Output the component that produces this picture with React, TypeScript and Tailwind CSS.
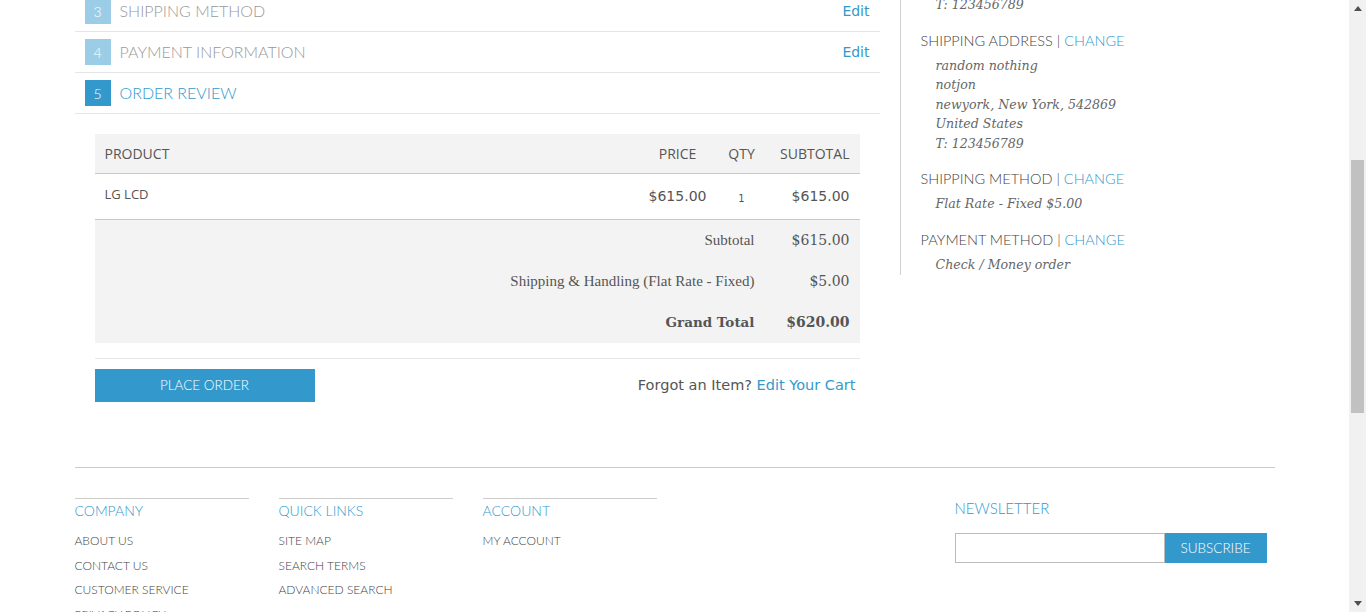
import React from "react";

const blue = "text-[#3399cc]";

function StepRow({ n, title, active, edit }: { n: number; title: string; active?: boolean; edit?: boolean }) {
  return (
    <div className="flex h-[41px] items-center border-b border-[#e6e6e6] px-[10px]">
      <div
        className={
          "flex h-[26px] w-[26px] items-center justify-center text-[14px] font-light text-white " +
          (active ? "bg-[#3399cc]" : "bg-[#9bcde6]")
        }
      >
        {n}
      </div>
      <div className={"-mt-px ml-[9px] text-[16px] font-light uppercase " + (active ? blue : "text-[#999]")}>{title}</div>
      {edit && (
        <a className={"ml-auto font-['DejaVu_Sans',sans-serif] text-[14px] " + blue} href="#">
          Edit
        </a>
      )}
    </div>
  );
}

function SideBlock({ title, lines }: { title: string; lines: string[] }) {
  return (
    <div className="mt-[16px]">
      <div className="text-[14.5px] font-light leading-[20px] text-[#444]">
        {title} | <a className={blue} href="#">CHANGE</a>
      </div>
      <div className="mt-[5px] pl-[15px]">
        {lines.map((l) => (
          <div key={l} className="font-['DejaVu_Serif',serif] text-[12.6px] italic leading-[19.5px] text-[#666]">
            {l}
          </div>
        ))}
      </div>
    </div>
  );
}

function FooterCol({ title, links }: { title: string; links: string[] }) {
  return (
    <div className="w-[174px] border-t border-[#cccccc]">
      <div className={"pt-[2px] text-[14px] font-light leading-[20px] " + blue}>{title}</div>
      <ul className="mt-[8px]">
        {links.map((l) => (
          <li key={l} className="text-[12px] font-light leading-[24.5px] text-[#444]">
            {l}
          </li>
        ))}
      </ul>
    </div>
  );
}

export default function App() {
  return (
    <div className="flex h-[612px] overflow-hidden bg-white font-['Lato',sans-serif]">
      <div className="flex-1 overflow-hidden">
        <div className="mx-auto w-[1200px]">
          {/* checkout body */}
          <div className="flex items-start">
            <div className="-mt-[9px] w-[805px]">
              <StepRow n={3} title="Shipping Method" edit />
              <StepRow n={4} title="Payment Information" edit />
              <StepRow n={5} title="Order Review" active />

              <div className="mx-[20px] mt-[20px]">
                <div className="flex h-[40px] items-center border-b border-[#c8c8c8] bg-[#f3f3f3] font-['Open_Sans',sans-serif] text-[14px] text-[#555]">
                  <div className="flex-1 pl-[10px]">PRODUCT</div>
                  <div className="w-[80px] text-center">PRICE</div>
                  <div className="w-[48px] text-center">QTY</div>
                  <div className="w-[94px] pr-[10px] text-right">SUBTOTAL</div>
                </div>
                <div className="flex h-[46px] items-center border-b border-[#c8c8c8] text-[#555]">
                  <div className="-mt-[4px] flex-1 pl-[10px] font-['Open_Sans',sans-serif] text-[13px]">LG LCD</div>
                  <div className="w-[80px] text-center font-['DejaVu_Sans',sans-serif] text-[14px]">$615.00</div>
                  <div className="w-[48px] pt-[3px] text-center font-['DejaVu_Sans',sans-serif] text-[10px]">1</div>
                  <div className="w-[94px] pr-[10px] text-right font-['DejaVu_Sans',sans-serif] text-[14px]">$615.00</div>
                </div>
                <div className="bg-[#f3f3f3] text-[#555]">
                  {[
                    ["Subtotal", "$615.00"],
                    ["Shipping & Handling (Flat Rate - Fixed)", "$5.00"],
                  ].map(([l, v]) => (
                    <div key={l} className="flex h-[41px] items-center justify-end">
                      <div className="font-['Liberation_Serif',serif] text-[15px]">{l}</div>
                      <div className="w-[105px] pr-[10px] text-right font-['DejaVu_Serif',serif] text-[14px]">{v}</div>
                    </div>
                  ))}
                  <div className="flex h-[41px] items-center justify-end font-bold">
                    <div className="font-['DejaVu_Serif',serif] text-[13.5px]">Grand Total</div>
                    <div className="w-[105px] pr-[10px] text-right font-['DejaVu_Serif',serif] text-[14px]">$620.00</div>
                  </div>
                </div>

                <div className="mt-[15px] flex items-center justify-between border-t border-[#e8e8e8] pt-[10px]">
                  <button className="h-[33px] w-[220px] bg-[#3399cc] text-[13.5px] font-light text-white">PLACE ORDER</button>
                  <div className="pr-[4px] font-['DejaVu_Sans',sans-serif] text-[14.5px] text-[#555]">
                    Forgot an Item? <a className={blue} href="#">Edit Your Cart</a>
                  </div>
                </div>
              </div>
            </div>

            {/* progress sidebar */}
            <div className="-mt-[5px] ml-[20px] flex-1 border-l border-[#d0d0d0] pb-[1px] pl-[20px]">
              <div className="pl-[15px] font-['DejaVu_Serif',serif] text-[12.6px] italic leading-[19.5px] text-[#666]">
                T: 123456789
              </div>
              <SideBlock
                title="SHIPPING ADDRESS"
                lines={["random nothing", "notjon", "newyork, New York, 542869", "United States", "T: 123456789"]}
              />
              <SideBlock title="SHIPPING METHOD" lines={["Flat Rate - Fixed $5.00"]} />
              <SideBlock title="PAYMENT METHOD" lines={["Check / Money order"]} />
            </div>
          </div>

          {/* footer */}
          <div className="mt-[65px] border-t border-[#cccccc] pt-[30px]">
            <div className="flex justify-between">
              <div className="flex gap-[30px]">
                <FooterCol title="COMPANY" links={["ABOUT US", "CONTACT US", "CUSTOMER SERVICE", "PRIVACY POLICY"]} />
                <FooterCol title="QUICK LINKS" links={["SITE MAP", "SEARCH TERMS", "ADVANCED SEARCH"]} />
                <FooterCol title="ACCOUNT" links={["MY ACCOUNT"]} />
              </div>
              <div className="w-[320px]">
                <div className={"text-[15px] font-light leading-[20px] " + blue}>NEWSLETTER</div>
                <div className="mt-[15px] flex">
                  <input className="h-[30px] w-[210px] border border-[#bbbbbb] outline-none" />
                  <button className="h-[30px] w-[102px] bg-[#3399cc] text-[13.5px] font-light text-white">SUBSCRIBE</button>
                </div>
              </div>
            </div>
          </div>
        </div>
      </div>

      {/* scrollbar */}
      <div className="flex w-[17px] flex-col bg-[#f1f1f1]">
        <div className="flex h-[17px] items-center justify-center">
          <svg width="8" height="5" viewBox="0 0 8 5">
            <path d="M4 0L8 5H0Z" fill="#505050" />
          </svg>
        </div>
        <div className="h-[143px]" />
        <div className="mx-[2px] h-[253px] bg-[#c1c1c1]" />
        <div className="flex-1" />
        <div className="flex h-[17px] items-center justify-center">
          <svg width="8" height="5" viewBox="0 0 8 5">
            <path d="M0 0H8L4 5Z" fill="#505050" />
          </svg>
        </div>
      </div>
    </div>
  );
}
